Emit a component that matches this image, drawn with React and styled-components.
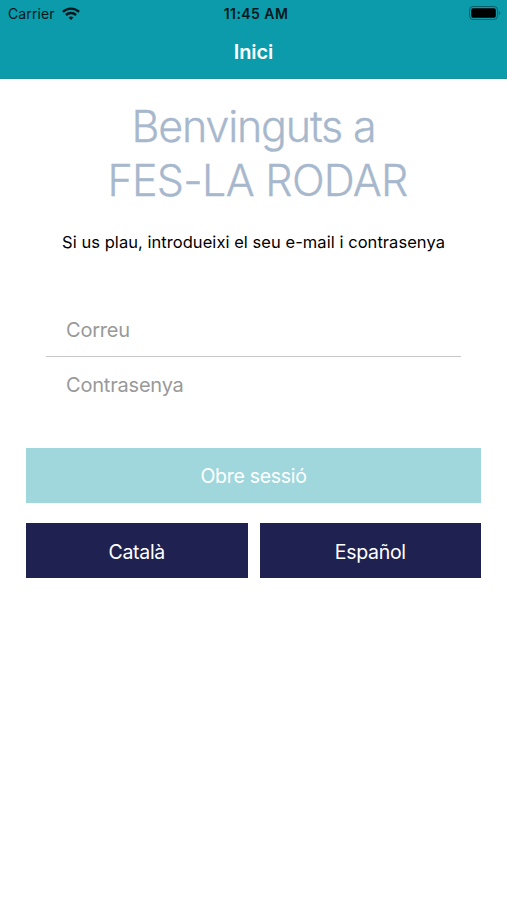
import React from 'react'
import styled, { createGlobalStyle } from 'styled-components'

const GlobalStyle = createGlobalStyle`
* {
    box-sizing: border-box;
}
body {
    margin: 0;
    background: #fff;
    font-family: Inter, "Liberation Sans", sans-serif;
}
`;

const Screen = styled.div`
display: flex;
flex-direction: column;
width: 100%;
height: 900px;
overflow: hidden;
background: #fff;
`;

const Header = styled.header`
height: 79px;
background: #0c9bab;
border-bottom: 1px solid #1a8f9f;
`;

const StatusBar = styled.div`
display: grid;
grid-template-columns: 1fr auto 1fr;
align-items: center;
height: 27px;
padding: 0 6px 0 8px;
color: #04181c;
font-size: 14px;
`;

const Carrier = styled.div`
display: flex;
align-items: center;
gap: 7px;
letter-spacing: 0.1px;
`;

const Time = styled.div`
font-weight: 600;
font-size: 14px;
letter-spacing: 0.45px;
padding-left: 3px;
`;

const Battery = styled.svg`
justify-self: end;
margin-top: -1px;
`;

const NavTitle = styled.h1`
margin: 0;
height: 50px;
line-height: 50px;
text-align: center;
color: #fff;
font-size: 20px;
font-weight: 600;
letter-spacing: -0.1px;
`;

const Content = styled.main`
display: flex;
flex-direction: column;
padding: 20px 26px 0;
`;

const Welcome = styled.h2`
display: flex;
flex-direction: column;
align-items: center;
margin: 0;
color: #a7b8cd;
font-size: 43px;
font-weight: 300;
line-height: 54px;
`;

const WelcomeLine = styled.span`
letter-spacing: ${({ $spacing }) => $spacing}px;
padding-left: ${({ $indent }) => $indent || 0}px;
-webkit-text-stroke: 0.3px currentColor;
`;

const Hint = styled.p`
margin: 24px 0 0;
text-align: center;
color: #000;
font-size: 16.5px;
letter-spacing: 0.05px;
line-height: 22px;
`;

const Form = styled.form`
display: flex;
flex-direction: column;
margin: 49px 20px 0;
`;

const Field = styled.input`
height: 55px;
padding: 1px 20px 0;
border: none;
border-bottom: ${({ $line }) => ($line ? '1px solid #c8c8cc' : 'none')};
outline: none;
background: transparent;
font-family: inherit;
font-size: 20px;
letter-spacing: -0.2px;

&::placeholder{
    color: #999;
    opacity: 1;
}
`;

const Button = styled.button`
flex: 1;
height: 55px;
padding: ${({ $shift }) => $shift || 0}px 0 0;
border: none;
background: ${({ $color }) => $color};
color: #fff;
font-family: inherit;
font-size: 19.5px;
letter-spacing: -0.3px;
`;

const Actions = styled.div`
display: flex;
gap: 12px;
margin-top: ${({ $top }) => $top}px;
`;

const WifiIcon = () => (
  <svg width="18" height="13" viewBox="0 0 18 13" fill="none" stroke="#04181c" strokeWidth="2.4">
    <path d="M.9 4.8C5.4.5 12.6.5 17.1 4.8" />
    <path d="M3.9 8c2.8-2.6 7.4-2.6 10.2 0" />
    <path d="M6.5 10.4c1.4-1.2 3.6-1.2 5 0L9 13z" fill="#04181c" stroke="none" />
  </svg>
)

const App = () => {
  return (
    <>
      <GlobalStyle />
      <Screen>
        <Header>
          <StatusBar>
            <Carrier>Carrier <WifiIcon /></Carrier>
            <Time>11:45 AM</Time>
            <Battery width="32" height="14" viewBox="0 0 32 14">
              <rect x=".5" y=".5" width="28" height="13" rx="3.5" fill="none" stroke="#04181c" strokeOpacity=".45" />
              <rect x="2.2" y="2.3" width="24.6" height="9.4" rx="1.8" fill="#000" />
              <path d="M29.8 5v4c2-.8 2-3.2 0-4z" fill="#04181c" fillOpacity=".45" />
            </Battery>
          </StatusBar>
          <NavTitle>Inici</NavTitle>
        </Header>
        <Content>
          <Welcome>
            <WelcomeLine $spacing={-1.2}>Benvinguts a</WelcomeLine>
            <WelcomeLine $spacing={-0.7} $indent={8}>FES-LA RODAR</WelcomeLine>
          </Welcome>
          <Hint>Si us plau, introdueixi el seu e-mail i contrasenya</Hint>
          <Form>
            <Field type="email" placeholder="Correu" $line />
            <Field type="password" placeholder="Contrasenya" />
          </Form>
          <Actions $top={36}>
            <Button $color="#9fd7dc">Obre sessió</Button>
          </Actions>
          <Actions $top={20}>
            <Button $color="#1f2251" $shift={2}>Català</Button>
            <Button $color="#1f2251" $shift={2}>Español</Button>
          </Actions>
        </Content>
      </Screen>
    </>
  )
}

export default App
